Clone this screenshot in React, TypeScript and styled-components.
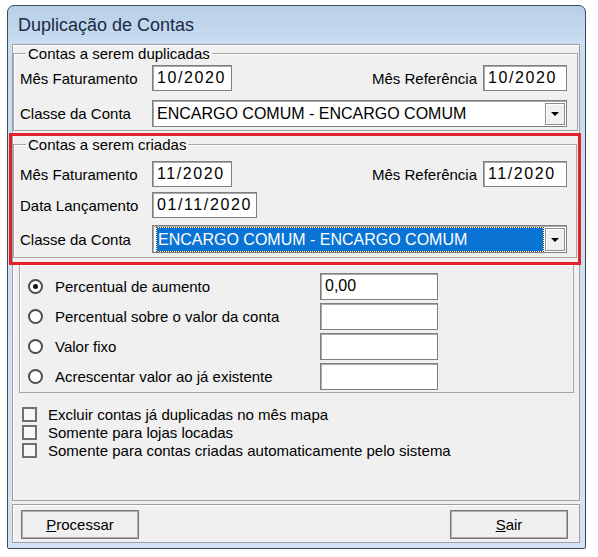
import React from 'react';
import styled, { createGlobalStyle } from 'styled-components';

const GlobalStyle = createGlobalStyle`
  * { box-sizing: border-box; }
  body {
    margin: 0;
    background: #ffffff;
    font-family: 'Liberation Sans', Arial, sans-serif;
    color: #000;
  }
  #root { padding: 5px 0 0 7px; }
`;

const Window = styled.div`
  width: 579px;
  height: 544px;
  border: 1px solid #3d4b5c;
  border-radius: 7px 7px 2px 2px;
  background: linear-gradient(to bottom, #b7cfe8 0px, #c9dcf0 36px, #d3e3f4 100%);
  display: flex;
  flex-direction: column;
  padding: 0 5px 5px 4px;
`;

const TitleBar = styled.div`
  height: 38px;
  display: flex;
  align-items: center;
  padding-left: 6px;
  font-size: 18px;
  color: #1a2b45;
`;

const Client = styled.div`
  flex: 1;
  background: #f0f0f0;
  display: flex;
  flex-direction: column;
  gap: 3px;
`;

const Panel = styled.div<{ $h: number }>`
  height: ${(p) => p.$h}px;
  border: 1px solid #a0a0a0;
  box-shadow: inset 1px 1px 0 #ffffff;
  display: flex;
  flex-direction: column;
`;

const Group = styled.fieldset`
  margin: 0;
  border: 1px solid #a6a6a6;
  box-shadow: inset 1px 1px 0 #ffffff;
  display: flex;
  flex-direction: column;
  min-width: 0;

  legend {
    font-size: 15px;
    line-height: 17px;
    padding: 0 2px;
    margin-left: 6px;
  }
`;

const SourceGroup = styled(Group)`
  margin-right: 1px;
  padding: 3px 10px 3px 6px;
  gap: 9px;
`;

const Highlight = styled.div`
  height: 132px;
  margin: 2px -2px 0 -4px;
  border: 3px solid #e1222b;
  display: flex;
  flex-direction: column;
`;

const TargetGroup = styled(Group)`
  margin: 0 1px;
  padding: 8px 9px 4px 6px;
  gap: 5px;

  & > div:last-child { margin-top: 2px; }
`;

const OptionGroup = styled(Group)`
  margin: 0 5px 0 6px;
  border-top: none;
  padding: 8px 8px 2px 8px;
  gap: 3px;
`;

const Row = styled.div`
  display: flex;
  align-items: center;
`;

const Label = styled.span<{ $w?: number }>`
  font-size: 15px;
  white-space: nowrap;
  ${(p) => (p.$w ? `width: ${p.$w}px; flex: none;` : '')}
`;

const Spacer = styled.div`
  flex: 1;
`;

const TextBox = styled.div<{ $w: number; $h?: number; $date?: boolean }>`
  width: ${(p) => p.$w}px;
  height: ${(p) => p.$h ?? 26}px;
  flex: none;
  background: #ffffff;
  border: 1px solid #7f7f7f;
  box-shadow: inset 1px 1px 0 #a9a9a9;
  font-size: 16px;
  letter-spacing: ${(p) => (p.$date ? '1.6px' : '0')};
  padding: 2px 0 0 4px;
  line-height: 20px;
  white-space: nowrap;
`;

const Combo = styled.div<{ $h: number }>`
  flex: 1;
  height: ${(p) => p.$h}px;
  background: #ffffff;
  border: 1px solid #7f7f7f;
  box-shadow: inset 1px 1px 0 #a9a9a9;
  display: flex;
  align-items: stretch;
  padding: 2px 1px 1px 4px;
  font-size: 16px;
`;

const ComboText = styled.div<{ $selected?: boolean }>`
  flex: 1;
  display: flex;
  align-items: center;
  white-space: nowrap;
  margin-right: 2px;
  ${(p) =>
    p.$selected
      ? `background: #0a74d4; color: #fff; outline: 1px dotted #5f4a1a; outline-offset: 0; padding-left: 1px;`
      : ''}
`;

const DropButton = styled.div`
  width: 20px;
  flex: none;
  background: #f0f0f0;
  border: 1px solid #8f8f8f;
  box-shadow: inset 1px 1px 0 #ffffff;
  display: flex;
  align-items: center;
  justify-content: center;

  &::after {
    content: '';
    border-left: 4px solid transparent;
    border-right: 4px solid transparent;
    border-top: 4px solid #000;
  }
`;

const RadioOption = styled.div`
  width: 292px;
  flex: none;
  display: flex;
  align-items: center;
  gap: 12px;
  font-size: 15px;
`;

const RadioDot = styled.span<{ $checked?: boolean }>`
  width: 15px;
  height: 15px;
  border-radius: 50%;
  border: 2px solid #4d4d4d;
  background: #ffffff;
  display: flex;
  align-items: center;
  justify-content: center;

  &::after {
    content: '';
    width: 5px;
    height: 5px;
    border-radius: 50%;
    background: ${(p) => (p.$checked ? '#111' : 'transparent')};
  }
`;

const Checks = styled.div`
  margin-top: 12px;
  padding-left: 9px;
  display: flex;
  flex-direction: column;
`;

const CheckRow = styled.div`
  height: 18px;
  display: flex;
  align-items: center;
  gap: 11px;
  font-size: 15px;
`;

const CheckBox = styled.span`
  width: 15px;
  height: 15px;
  flex: none;
  background: #f7f7f7;
  border: 2px solid #707070;
`;

const ButtonBar = styled.div`
  display: flex;
  justify-content: space-between;
  padding: 5px 11px 0 8px;
`;

const Button = styled.div`
  width: 118px;
  height: 29px;
  background: #f0f0f0;
  border: 1px solid #777777;
  box-shadow: inset -1px -1px 0 #b0b0b0, inset 1px 1px 0 #b0b0b0;
  display: flex;
  align-items: center;
  justify-content: center;
  font-size: 15px;

  u { text-decoration: underline; }
`;

const DatePair: React.FC<{ month: string; refMonth: string }> = ({ month, refMonth }) => (
  <Row>
    <Label $w={132}>Mês Faturamento</Label>
    <TextBox $w={80} $date>{month}</TextBox>
    <Spacer />
    <Label style={{ marginRight: 6 }}>Mês Referência</Label>
    <TextBox $w={84} $date>{refMonth}</TextBox>
  </Row>
);

const options = [
  { label: 'Percentual de aumento', value: '0,00', checked: true },
  { label: 'Percentual sobre o valor da conta', value: '' },
  { label: 'Valor fixo', value: '' },
  { label: 'Acrescentar valor ao já existente', value: '' },
];

const checks = [
  'Excluir contas já duplicadas no mês mapa',
  'Somente para lojas locadas',
  'Somente para contas criadas automaticamente pelo sistema',
];

export default function App() {
  return (
    <>
      <GlobalStyle />
      <Window>
        <TitleBar>Duplicação de Contas</TitleBar>
        <Client>
          <Panel $h={457}>
            <SourceGroup>
              <legend>Contas a serem duplicadas</legend>
              <DatePair month="10/2020" refMonth="10/2020" />
              <Row>
                <Label $w={132}>Classe da Conta</Label>
                <Combo $h={27}>
                  <ComboText>ENCARGO COMUM - ENCARGO COMUM</ComboText>
                  <DropButton />
                </Combo>
              </Row>
            </SourceGroup>

            <Highlight>
              <TargetGroup>
                <legend>Contas a serem criadas</legend>
                <DatePair month="11/2020" refMonth="11/2020" />
                <Row>
                  <Label $w={132}>Data Lançamento</Label>
                  <TextBox $w={105} $date>01/11/2020</TextBox>
                </Row>
                <Row>
                  <Label $w={132}>Classe da Conta</Label>
                  <Combo $h={28}>
                    <ComboText $selected>ENCARGO COMUM - ENCARGO COMUM</ComboText>
                    <DropButton />
                  </Combo>
                </Row>
              </TargetGroup>
            </Highlight>

            <OptionGroup>
              {options.map((o) => (
                <Row key={o.label}>
                  <RadioOption>
                    <RadioDot $checked={o.checked} />
                    {o.label}
                  </RadioOption>
                  <TextBox $w={118} $h={27}>{o.value}</TextBox>
                </Row>
              ))}
            </OptionGroup>

            <Checks>
              {checks.map((c) => (
                <CheckRow key={c}>
                  <CheckBox />
                  {c}
                </CheckRow>
              ))}
            </Checks>
          </Panel>
          <Panel $h={39}>
            <ButtonBar>
              <Button>
                <u>P</u>rocessar
              </Button>
              <Button>
                <u>S</u>air
              </Button>
            </ButtonBar>
          </Panel>
        </Client>
      </Window>
    </>
  );
}
